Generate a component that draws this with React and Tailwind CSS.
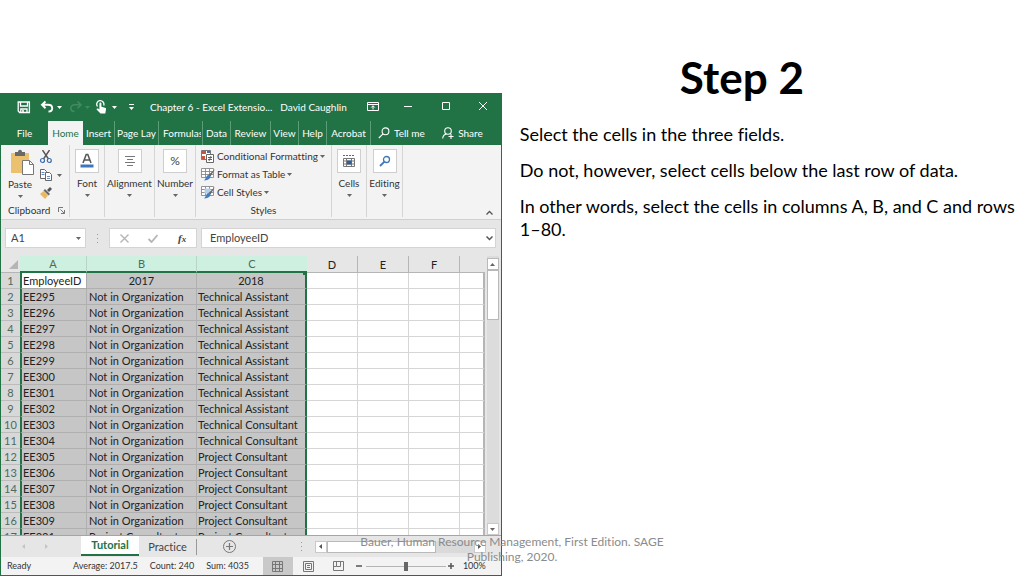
import React, { useState } from "react";

const rows = [
  ["EE295", "Not in Organization", "Technical Assistant"],
  ["EE296", "Not in Organization", "Technical Assistant"],
  ["EE297", "Not in Organization", "Technical Assistant"],
  ["EE298", "Not in Organization", "Technical Assistant"],
  ["EE299", "Not in Organization", "Technical Assistant"],
  ["EE300", "Not in Organization", "Technical Assistant"],
  ["EE301", "Not in Organization", "Technical Assistant"],
  ["EE302", "Not in Organization", "Technical Assistant"],
  ["EE303", "Not in Organization", "Technical Consultant"],
  ["EE304", "Not in Organization", "Technical Consultant"],
  ["EE305", "Not in Organization", "Project Consultant"],
  ["EE306", "Not in Organization", "Project Consultant"],
  ["EE307", "Not in Organization", "Project Consultant"],
  ["EE308", "Not in Organization", "Project Consultant"],
  ["EE309", "Not in Organization", "Project Consultant"],
  ["EE331", "Project Consultant", "Project Consultant"],
];

const tabs = [
  { name: "File", cls: "w-[47px]" },
  { name: "Home", cls: "w-[35px] bg-[#f3f3f3] text-[#217346]" },
  { name: "Insert", cls: "w-8 border-r border-[#5d9c79]" },
  { name: "Page Lay", cls: "w-11 border-r border-[#5d9c79]" },
  { name: "Formulas", cls: "w-11 border-r border-[#5d9c79]" },
  { name: "Data", cls: "w-7 border-r border-[#5d9c79]" },
  { name: "Review", cls: "w-10 border-r border-[#5d9c79]" },
  { name: "View", cls: "w-7 border-r border-[#5d9c79]" },
  { name: "Help", cls: "w-7 border-r border-[#5d9c79]" },
  { name: "Acrobat", cls: "w-11 border-r border-[#5d9c79]" },
];

const Caret = ({ className = "" }) => (
  <svg className={`w-[5px] h-[3px] shrink-0 ${className}`} viewBox="0 0 5 3" fill="currentColor">
    <path d="M0 0h5L2.5 3z" />
  </svg>
);

const TitleBar = () => (
  <div className="flex items-center h-7 text-white">
    <button aria-label="Save" className="ml-[15px] w-4 shrink-0">
      <svg className="w-4 h-4" viewBox="0 0 16 16" fill="none" stroke="currentColor" strokeWidth="1.3">
        <path d="M2.2 3h11.2v10.5H3.6L2.2 12z" />
        <path d="M4.5 3v4h7V3M4.8 13.5V10h6.2v3.5" />
        <path d="M7 11v2.5" strokeWidth="1.6" />
      </svg>
    </button>
    <button aria-label="Undo" className="ml-2 flex items-center gap-[3px] shrink-0">
      <svg className="w-[14px] h-[14px]" viewBox="0 0 14 14" fill="none" stroke="currentColor" strokeWidth="1.9">
        <path d="M5.5 1.5L2 4.8l3.5 3.4M2.2 4.8H8c2.6 0 4.2 1.4 4.2 3.4S10.8 11.5 8.500 11.500" />
      </svg>
      <Caret />
    </button>
    <button aria-label="Redo" className="ml-[7px] flex items-center gap-[2px] shrink-0 text-[#438a63]">
      <svg className="w-[14px] h-[14px]" viewBox="0 0 14 14" fill="none" stroke="currentColor" strokeWidth="1.6">
        <path d="M8.500 1.500L12 4.8 8.500 8.2M11.8 4.8H6C3.4 4.8 1.8 6.2 1.8 8.200s1.4 3.300 3.700 3.300" />
      </svg>
      <Caret />
    </button>
    <button aria-label="Touch mode" className="ml-1 flex items-center gap-1 shrink-0">
      <svg className="w-[14px] h-[14px]" viewBox="0 0 14 14" fill="none">
        <path d="M3.500 6.500a3.600 3.600 0 1 1 6.200-1" stroke="currentColor" strokeWidth="1.3" />
        <path d="M5.400 3.500c0-1.300 2-1.300 2 0v3.300l3.600.9c.9.200 1.200.8 1 1.600L11.300 13.500H6.500L2.800 9.800c-.6-.9.400-1.800 1.300-1.200l1.300.9z" fill="currentColor" />
      </svg>
      <Caret />
    </button>
    <button aria-label="Customize toolbar" className="ml-3 shrink-0">
      <svg className="w-[5px] h-[6px]" viewBox="0 0 5 6" fill="currentColor">
        <path d="M0 0h5v1H0zM0 3h5L2.500 6z" />
      </svg>
    </button>
    <span className="ml-4 whitespace-nowrap">Chapter 6 - Excel Extensio...</span>
    <span className="ml-auto whitespace-nowrap">David Caughlin</span>
    <button aria-label="Ribbon display" className="ml-5">
      <svg className="w-3 h-3" viewBox="0 0 12 12" fill="none" stroke="currentColor">
        <path d="M.5 1.500h11v8H.5zM.5 3.500h11M6 8.500V5M4.300 6.500L6 4.700 7.700 6.500" />
      </svg>
    </button>
    <button aria-label="Minimize" className="ml-6">
      <svg className="w-[10px] h-[10px]" viewBox="0 0 10 10" stroke="currentColor">
        <path d="M1 4.500h8" />
      </svg>
    </button>
    <button aria-label="Maximize" className="ml-7">
      <svg className="w-[10px] h-[10px]" viewBox="0 0 10 10" fill="none" stroke="currentColor">
        <path d="M1.500 .5h7v7h-7z" />
      </svg>
    </button>
    <button aria-label="Close" className="ml-[27px] mr-[13px]">
      <svg className="w-[10px] h-[10px]" viewBox="0 0 10 10" stroke="currentColor">
        <path d="M1 0l8 8M9 0L1 8" />
      </svg>
    </button>
  </div>
);

const TabBar = () => (
  <div className="flex items-center h-6 text-white">
    {tabs.map((t) => (
      <button key={t.name} className={`h-full shrink-0 flex items-center ${t.cls}`}>
        {t.name === "Formulas" ? (
          <span className="block overflow-hidden w-[38px] ml-1 text-left">{t.name}</span>
        ) : (
          <span className="w-full whitespace-nowrap text-center">{t.name}</span>
        )}
      </button>
    ))}
    <button className="ml-[7px] flex items-center gap-1 whitespace-nowrap">
      <svg className="w-3 h-3" viewBox="0 0 12 12" fill="none" stroke="currentColor" strokeWidth="1.1">
        <circle cx="7.5" cy="4.3" r="3.4" />
        <path d="M5 6.800L.8 11" />
      </svg>
      Tell me
    </button>
    <button className="ml-auto mr-[18px] flex items-center gap-1 whitespace-nowrap">
      <svg className="w-3 h-3" viewBox="0 0 12 12" fill="none" stroke="currentColor" strokeWidth="1.1">
        <circle cx="6" cy="4" r="3.3" />
        <path d="M.7 11.500C.9 9 2.500 7.300 4.500 7M6.500 9.500h5M9 7v5" />
      </svg>
      Share
    </button>
  </div>
);

const BigTool = ({ label, className, children }) => (
  <div className={`border-r border-[#d5d5d5] h-[72px] shrink-0 ${className}`}>
    <button className="w-full flex flex-col items-center whitespace-nowrap">
      <span className="w-6 h-6 mt-1 border border-[#cfcfcf] bg-white flex items-center justify-center">
        {children}
      </span>
      <span className="mt-[3px] leading-[14px]">{label}</span>
      <Caret className="mt-1 text-[#666]" />
    </button>
  </div>
);

const StyleIcon = ({ kind }) => (
  <svg className="w-[14px] h-[14px] shrink-0" viewBox="0 0 14 14" fill="none">
    {kind === "cond" ? (
      <>
        <path d="M.5 1.500h9v9h-9z" fill="#fff" stroke="#777" />
        <path d="M1 2h4v3H1zM1 7h3v3H1z" fill="#c8553d" />
        <path d="M6 2h3v2H6z" fill="#4472a8" />
        <path d="M5.500 5.500h7v8h-7z" fill="#fff" stroke="#666" />
        <path d="M7 8.500h4M7 10.500h4M10 7l-2 5" stroke="#555" strokeWidth=".9" />
      </>
    ) : (
      <>
        <path d="M.5 1.500h12v9H.5zM.5 4.500h12M.5 7.500h12M4.500 1.500v9M8.500 1.500v9" fill="#fff" stroke="#888" strokeWidth=".9" />
        {kind === "cell" && <path d="M3.500 3.500h6v5h-6z" fill="#b5cfe9" />}
        <path d="M14 2L9.500 9.500 7.500 8z" fill="#666" />
        <path d="M7.500 8c2 0 2.500 1.500 1.500 3s-3 2.500-6 2.500c2-1.500 2-5 4.500-5.500z" fill="#3f7ec2" />
      </>
    )}
  </svg>
);

const Ribbon = () => (
  <div className="flex h-[75px] bg-[#f3f3f3] border-b border-[#d0d0d0] text-[#333]">
    <div className="w-[69px] h-[72px] shrink-0 border-r border-[#d5d5d5] flex flex-col">
      <div className="flex flex-1">
        <button className="w-[30px] ml-1 flex flex-col items-center">
          <svg className="w-6 h-7 mt-1 ml-1" viewBox="0 0 24 28">
            <path d="M1 4h18v20H1z" fill="#ebc06f" />
            <path d="M5 3h3c0-3 4-3 4 0h3v4H5z" fill="#696969" />
            <path d="M12.500 11.500h7l4 4v10h-11z" fill="#fff" stroke="#777" />
            <path d="M19.500 11.500v4h4" fill="none" stroke="#777" />
          </svg>
          <span className="leading-[14px]">Paste</span>
          <Caret className="mt-1 text-[#666]" />
        </button>
        <div className="flex flex-col gap-1 ml-1 mt-[5px]">
          <button aria-label="Cut">
            <svg className="w-[14px] h-[14px]" viewBox="0 0 14 14" fill="none">
              <path d="M3.500 0l6 9M10.500 0l-6 9" stroke="#555" strokeWidth="1.4" />
              <circle cx="3.5" cy="10.5" r="2" stroke="#3f6fae" strokeWidth="1.2" />
              <circle cx="10.3" cy="10.5" r="2" stroke="#3f6fae" strokeWidth="1.2" />
            </svg>
          </button>
          <button aria-label="Copy" className="flex items-center gap-1">
            <svg className="w-[14px] h-[14px]" viewBox="0 0 14 14" fill="#fff" stroke="#666">
              <path d="M1.500 1.500h4l2 2v7h-6z" />
              <path d="M6.500 4.500h4l2 2v6h-6z" />
              <path d="M2.500 4.500h3M2.500 6.500h3M8 8.500h3M8 10.500h3" stroke="#3f6fae" strokeWidth=".8" />
            </svg>
            <Caret className="text-[#666]" />
          </button>
          <button aria-label="Format painter">
            <svg className="w-[14px] h-[14px]" viewBox="0 0 14 14">
              <path d="M11 1l2 2-3 3-2-2z" fill="#555" />
              <path d="M6 3l5 5-1.500 1.500-5-5z" fill="#666" />
              <path d="M4.500 5L9 9.500 6 13 1 8z" fill="#eab765" />
            </svg>
          </button>
        </div>
      </div>
      <div className="flex items-center justify-between pl-[7px] pr-1 h-[14px] leading-[14px]">
        Clipboard
        <button aria-label="Clipboard settings">
          <svg className="w-[7px] h-[7px]" viewBox="0 0 7 7" fill="none" stroke="#777">
            <path d="M.5 5V.5H5M2.500 2.500l4 4M6.500 3v3.500H3" />
          </svg>
        </button>
      </div>
    </div>
    <BigTool label="Font" className="w-[35px]">
      <svg className="w-4 h-4" viewBox="0 0 16 16">
        <path d="M4 10L7.200 1.500h1.600L12 10M5.300 7h5.400" fill="none" stroke="#555" strokeWidth="1.5" />
        <path d="M1.500 11.500h13v3h-13z" fill="#3c76bb" />
      </svg>
    </BigTool>
    <BigTool label="Alignment" className="w-[50px]">
      <svg className="w-3 h-3" viewBox="0 0 12 12" stroke="#777">
        <path d="M1 1.500h10M3 4.500h6M1 7.500h10M3 10.500h6" />
      </svg>
    </BigTool>
    <BigTool label="Number" className="w-[41px]">
      <span className="text-[12px] text-[#444]">%</span>
    </BigTool>
    <div className="w-[136px] h-[72px] shrink-0 border-r border-[#d5d5d5] flex flex-col">
      <div className="flex flex-col items-start pl-[5px] pt-1 gap-1 flex-1 whitespace-nowrap">
        <button className="flex items-center gap-[2px] leading-[14px]">
          <StyleIcon kind="cond" />
          Conditional Formatting
          <Caret className="text-[#666]" />
        </button>
        <button className="flex items-center gap-[2px] leading-[14px]">
          <StyleIcon kind="table" />
          Format as Table
          <Caret className="text-[#666]" />
        </button>
        <button className="flex items-center gap-[2px] leading-[14px]">
          <StyleIcon kind="cell" />
          Cell Styles
          <Caret className="text-[#666]" />
        </button>
      </div>
      <div className="text-center h-[14px] leading-[14px]">Styles</div>
    </div>
    <BigTool label="Cells" className="w-[35px]">
      <svg className="w-[14px] h-[14px]" viewBox="0 0 14 14" fill="none">
        <path d="M1 1.500h12" stroke="#3f6fae" strokeDasharray="2 1" />
        <path d="M1.500 4.500h11v8h-11zM1.500 7h11M1.500 10h11M4.500 4.500v8M9.500 4.500v8" stroke="#777" />
        <path d="M5 6.500h4.500v4H5z" fill="#2f5f95" />
      </svg>
    </BigTool>
    <BigTool label="Editing" className="w-9">
      <svg className="w-3 h-3" viewBox="0 0 12 12" fill="none" stroke="#3c76bb" strokeWidth="1.3">
        <circle cx="7.5" cy="4.5" r="3" />
        <path d="M5.200 6.800L1 11" strokeWidth="1.8" />
      </svg>
    </BigTool>
    <button aria-label="Collapse ribbon" className="ml-auto mr-2 self-end mb-1">
      <svg className="w-[7px] h-[5px]" viewBox="0 0 7 5" fill="none" stroke="#555" strokeWidth="1.3">
        <path d="M.5 4.500l3-3 3 3" />
      </svg>
    </button>
  </div>
);

const FormulaBar = () => {
  const [value, setValue] = useState("EmployeeID");
  return (
    <div className="flex items-center h-9 pl-1 pr-[5px] text-[11px] text-[#444]">
      <div className="flex items-center w-[81px] h-5 bg-white border border-[#d4d4d4] shrink-0 pr-1">
        <input aria-label="Name box" defaultValue="A1" className="w-full min-w-0 pl-[5px] outline-none" />
        <Caret className="text-[#666]" />
      </div>
      <svg className="w-[3px] h-[9px] mx-[10px] shrink-0" viewBox="0 0 3 9" fill="#999">
        <path d="M1 0h1v1H1zM1 4h1v1H1zM1 8h1v1H1z" />
      </svg>
      <div className="flex items-center justify-around w-[88px] h-5 bg-white border border-[#d4d4d4] shrink-0">
        <button aria-label="Cancel">
          <svg className="w-[9px] h-[9px]" viewBox="0 0 9 9" stroke="#b5b5b5" strokeWidth="1.4">
            <path d="M.5.5l8 8M8.500.5l-8 8" />
          </svg>
        </button>
        <button aria-label="Enter">
          <svg className="w-[10px] h-[9px]" viewBox="0 0 10 9" fill="none" stroke="#b5b5b5" strokeWidth="1.8">
            <path d="M.5 5l3 3 6-7" />
          </svg>
        </button>
        <button aria-label="Insert function" className="italic font-bold font-['Liberation_Serif',serif] leading-4">
          f<span className="text-[9px]">x</span>
        </button>
      </div>
      <div className="flex items-center flex-1 min-w-0 h-5 ml-1 bg-white border border-[#d4d4d4] pr-[2px]">
        <input
          aria-label="Formula"
          value={value}
          onChange={(e) => setValue(e.target.value)}
          className="w-full min-w-0 pl-2 outline-none"
        />
        <svg className="w-[7px] h-[5px] shrink-0" viewBox="0 0 7 5" fill="none" stroke="#555" strokeWidth="1.5">
          <path d="M.5.5l3 3 3-3" />
        </svg>
      </div>
    </div>
  );
};

const EmptyCells = () => (
  <>
    <td className="border-r border-b border-[#d6d6d6]"></td>
    <td className="border-r border-b border-[#d6d6d6]"></td>
    <td className="border-r border-b border-[#d6d6d6]"></td>
    <td className="border-r-2 border-b border-[#d6d6d6] border-r-[#b5b5b5]"></td>
  </>
);

const Sheet = () => (
  <div className="flex h-[279px] overflow-hidden">
    <div className="flex-1 min-w-0 overflow-hidden">
      <table className="w-full table-fixed border-separate border-spacing-0 bg-white text-[11px] leading-[15px] text-[#222] whitespace-nowrap">
        <colgroup>
          <col className="w-[19px]" />
          <col className="w-[67px]" />
          <col className="w-[110px]" />
          <col className="w-[110px]" />
          <col className="w-[51px]" />
          <col className="w-[51px]" />
          <col className="w-[51px]" />
          <col />
        </colgroup>
        <thead>
          <tr className="h-[17px]">
            <th className="bg-[#e6e6e6] border-b border-[#b5b5b5] p-0">
              <svg className="w-[9px] h-[9px] ml-auto mr-[2px]" viewBox="0 0 9 9" fill="#b5b5b5">
                <path d="M9 0v9H0z" />
              </svg>
            </th>
            <th className="p-0 font-normal bg-[#cdf0e0] text-[#4c6b5b] border-r border-r-[#b9d5c8] border-b-2 border-b-[#217346]">A</th>
            <th className="p-0 font-normal bg-[#cdf0e0] text-[#4c6b5b] border-r border-r-[#b9d5c8] border-b-2 border-b-[#217346]">B</th>
            <th className="relative p-0 font-normal bg-[#cdf0e0] text-[#4c6b5b] border-b-2 border-b-[#217346]">
              C
              <span className="absolute right-0 -bottom-1 w-1 h-1 bg-[#217346]"></span>
            </th>
            <th className="p-0 font-normal bg-[#e6e6e6] border-r border-b border-[#b5b5b5]">D</th>
            <th className="p-0 font-normal bg-[#e6e6e6] border-r border-b border-[#b5b5b5]">E</th>
            <th className="p-0 font-normal bg-[#e6e6e6] border-r border-b border-[#b5b5b5]">F</th>
            <th className="p-0 bg-[#e6e6e6] border-b border-[#b5b5b5]"></th>
          </tr>
        </thead>
        <tbody>
          <tr className="h-4">
            <th className="p-0 font-normal bg-[#d8d8d8] text-[#4c6b5b] border-b border-[#bcbcbc]">1</th>
            <td className="p-0 pl-px bg-white border-l-2 border-l-[#217346] border-r border-r-[#aaa] border-b border-b-[#aaa]">EmployeeID</td>
            <td className="p-0 text-center bg-[#c6c6c6] border-r border-b border-[#b0b0b0]">2017</td>
            <td className="p-0 text-center bg-[#c6c6c6] border-b border-b-[#b0b0b0] border-r-2 border-r-[#217346]">2018</td>
            <EmptyCells />
          </tr>
          {rows.map((row, i) => (
            <tr key={i} className="h-4">
              <th className="p-0 font-normal bg-[#d8d8d8] text-[#4c6b5b] border-b border-[#bcbcbc]">{i + 2}</th>
              <td className="p-0 pl-px bg-[#c6c6c6] border-l-2 border-l-[#217346] border-r border-r-[#b0b0b0] border-b border-b-[#b0b0b0]">{row[0]}</td>
              <td className="p-0 pl-[2px] bg-[#c6c6c6] border-r border-b border-[#b0b0b0]">{row[1]}</td>
              <td className="p-0 pl-px bg-[#c6c6c6] border-b border-b-[#b0b0b0] border-r-2 border-r-[#217346]">{row[2]}</td>
              <EmptyCells />
            </tr>
          ))}
        </tbody>
      </table>
    </div>
    <div className="flex flex-col w-3 ml-[2px] mr-[2px] pt-[2px] bg-[#dcdcdc] shrink-0">
      <button aria-label="Scroll up" className="h-3 bg-white border border-[#b9b9b9] flex items-center justify-center">
        <Caret className="rotate-180 text-[#666]" />
      </button>
      <div className="h-[50px] bg-white border border-[#b9b9b9]"></div>
      <button aria-label="Scroll down" className="h-3 mt-auto bg-white border border-[#c9c9c9] flex items-center justify-center">
        <Caret className="text-[#666]" />
      </button>
    </div>
  </div>
);

const SheetTabs = () => (
  <div className="flex items-center h-[22px] bg-[#e6e6e6] border-t border-[#a5a5a5] text-[11px] text-[#444]">
    <button aria-label="Previous sheet" className="ml-5">
      <Caret className="rotate-90 text-[#c4c4c4]" />
    </button>
    <button aria-label="Next sheet" className="ml-[18px]">
      <Caret className="-rotate-90 text-[#c4c4c4]" />
    </button>
    <button className="ml-8 mb-px w-[58px] h-5 bg-white border-b-2 border-[#217346] font-bold text-[#217346] leading-[18px]">Tutorial</button>
    <button className="w-[58px] h-4 border-r border-[#999] leading-4">Practice</button>
    <button aria-label="New sheet" className="ml-[26px]">
      <svg className="w-[13px] h-[13px]" viewBox="0 0 13 13" fill="none" stroke="#777">
        <circle cx="6.5" cy="6.5" r="6" />
        <path d="M6.500 3v7M3 6.500h7" strokeWidth="1.2" />
      </svg>
    </button>
    <svg className="w-[3px] h-[9px] ml-auto shrink-0" viewBox="0 0 3 9" fill="#999">
      <path d="M1 0h1v1H1zM1 4h1v1H1zM1 8h1v1H1z" />
    </svg>
    <div className="flex ml-3 mr-[15px] w-[171px] h-3 bg-[#dadada] shrink-0">
      <button aria-label="Scroll left" className="w-3 bg-white border border-[#c9c9c9] flex items-center justify-center">
        <Caret className="rotate-90 text-[#555]" />
      </button>
      <div className="w-[109px] bg-white border border-[#b9b9b9]"></div>
      <button aria-label="Scroll right" className="w-3 ml-auto bg-white border border-[#c9c9c9] flex items-center justify-center">
        <Caret className="-rotate-90 text-[#555]" />
      </button>
    </div>
  </div>
);

const StatusBar = () => {
  const [zoom, setZoom] = useState(50);
  return (
    <div className="flex items-center h-[18px] pl-[6px] pr-[15px] bg-[#f3f3f3] text-[9px] text-[#333] whitespace-nowrap">
      <span>Ready</span>
      <span className="ml-auto">Average: 2017.5</span>
      <span className="ml-3">Count: 240</span>
      <span className="ml-3">Sum: 4035</span>
      <button aria-label="Normal view" className="ml-[14px] w-[30px] h-full bg-[#c9c9c9] flex items-center justify-center">
        <svg className="w-[11px] h-[11px]" viewBox="0 0 11 11" fill="none" stroke="#777">
          <path d="M.5.5h10v10H.5zM.5 3.500h10M.5 7.500h10M3.500.5v10M7.500.5v10" />
        </svg>
      </button>
      <button aria-label="Page layout" className="w-[31px] flex justify-center">
        <svg className="w-[11px] h-[11px]" viewBox="0 0 11 11" fill="none" stroke="#777">
          <path d="M.5.5h10v10H.5zM2.500 2.500h6v6h-6zM4 4.500h3M4 6.500h3" />
        </svg>
      </button>
      <button aria-label="Page break preview" className="w-[30px] flex justify-center">
        <svg className="w-[11px] h-[11px]" viewBox="0 0 11 11" fill="none" stroke="#777">
          <path d="M.5.5h10v9H.5zM3.500.5v5h4v-5M.5 5.500h3" />
        </svg>
      </button>
      <button aria-label="Zoom out" className="ml-px w-[9px] flex justify-center">
        <svg className="w-[6px] h-[6px]" viewBox="0 0 6 6" stroke="#555" strokeWidth="1.5">
          <path d="M0 3h6" />
        </svg>
      </button>
      <input
        type="range"
        aria-label="Zoom"
        value={zoom}
        onChange={(e) => setZoom(e.target.value)}
        className="w-20 mx-[2px] h-px appearance-none bg-[#b5b5b5] [&::-webkit-slider-thumb]:appearance-none [&::-webkit-slider-thumb]:w-1 [&::-webkit-slider-thumb]:h-[9px] [&::-webkit-slider-thumb]:bg-[#666]"
      />
      <button aria-label="Zoom in" className="w-[7px] mr-2">
        <svg className="w-[6px] h-[6px]" viewBox="0 0 6 6" stroke="#555" strokeWidth="1.5">
          <path d="M0 3h6M3 0v6" />
        </svg>
      </button>
      <span>100%</span>
    </div>
  );
};

const App = () => {
  return (
    <main className="relative flex min-h-screen bg-white font-['Lato',sans-serif] [font-variant-ligatures:none]">
      <section className="w-[49%] min-w-[500px] shrink-0 pt-[93px]">
        <div className="bg-[#217346] px-px pb-px text-[10px]">
          <TitleBar />
          <TabBar />
          <Ribbon />
          <div className="bg-[#e6e6e6]">
            <FormulaBar />
            <Sheet />
            <SheetTabs />
          </div>
          <StatusBar />
        </div>
      </section>
      <section className="flex-1 min-w-0 pl-[18px] pt-[50px]">
        <h1 className="text-center text-[44px] leading-[54px] font-bold text-black pr-[60px]">Step 2</h1>
        <div className="mt-[19px] flex flex-col gap-[13px] text-[18px] leading-[23px] text-black">
          <p>Select the cells in the three fields.</p>
          <p>Do not, however, select cells below the last row of data.</p>
          <p>In other words, select the cells in columns A, B, and C and rows 1–80.</p>
        </div>
      </section>
      <footer className="absolute inset-x-0 bottom-3 flex justify-center text-center text-[12px] leading-[15px] text-[#8b8b8b]">
        <p className="w-[320px]">Bauer, Human Resource Management, First Edition. SAGE Publishing, 2020.</p>
      </footer>
    </main>
  );
};

export default App;
